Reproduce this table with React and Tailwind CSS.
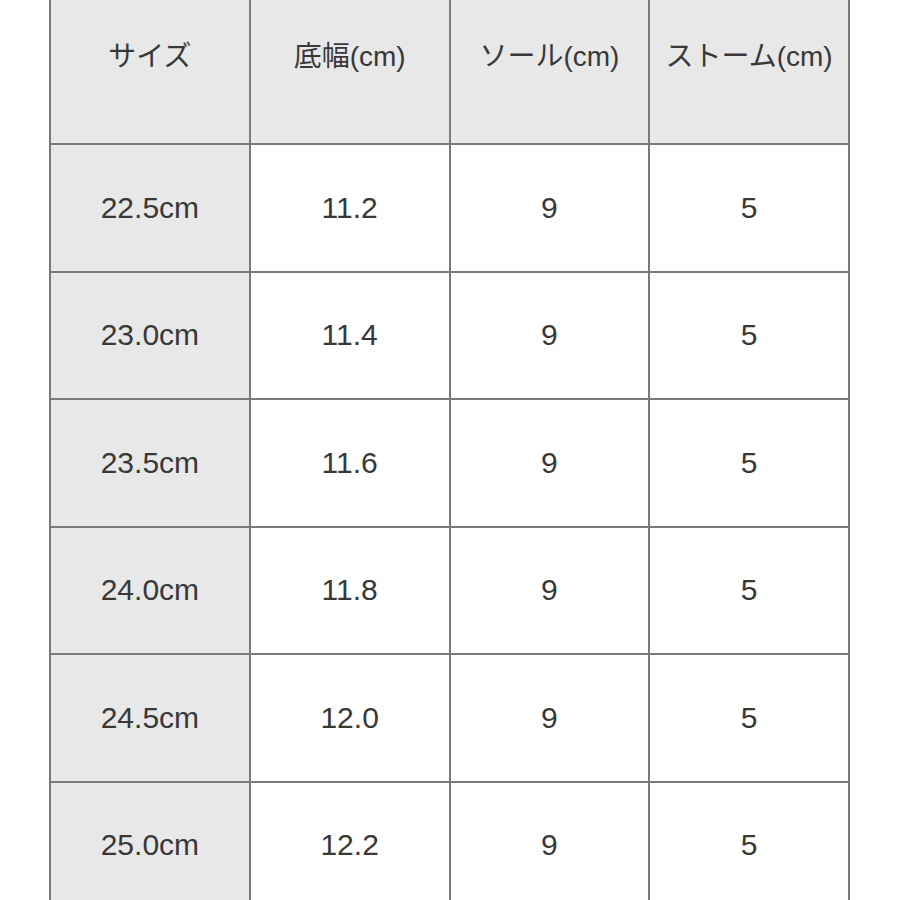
import React from 'react';

const headers = ['サイズ', '底幅(cm)', 'ソール(cm)', 'ストーム(cm)'];

const rows = [
    ['22.5cm', '11.2', '9', '5'],
    ['23.0cm', '11.4', '9', '5'],
    ['23.5cm', '11.6', '9', '5'],
    ['24.0cm', '11.8', '9', '5'],
    ['24.5cm', '12.0', '9', '5'],
    ['25.0cm', '12.2', '9', '5'],
];

const App = () => {
    return (
        <div
            className="w-[900px] h-[900px] overflow-hidden bg-white text-[#383838]"
            style={{ fontFamily: '"Liberation Sans", "Noto Sans CJK JP", sans-serif' }}
        >
            {/* Size table */}
            <div className="ml-[49px] -mt-[2px] w-[801px] grid grid-cols-4 gap-[2px] p-[2px] bg-[#7a7a7a]">
                {headers.map((h) => (
                    <div key={h} className="h-[143px] bg-[#e8e8e8] flex justify-center pt-[39px] text-[28px] leading-[36px]">
                        {h}
                    </div>
                ))}
                {rows.map((row, i) =>
                    row.map((cell, j) => (
                        <div
                            key={`${i}-${j}`}
                            className={`h-[125.5px] flex items-center justify-center text-[30px] leading-none ${j === 0 ? 'bg-[#e8e8e8]' : 'bg-white'}`}
                        >
                            {cell}
                        </div>
                    ))
                )}
            </div>
        </div>
    );
};

export default App;
